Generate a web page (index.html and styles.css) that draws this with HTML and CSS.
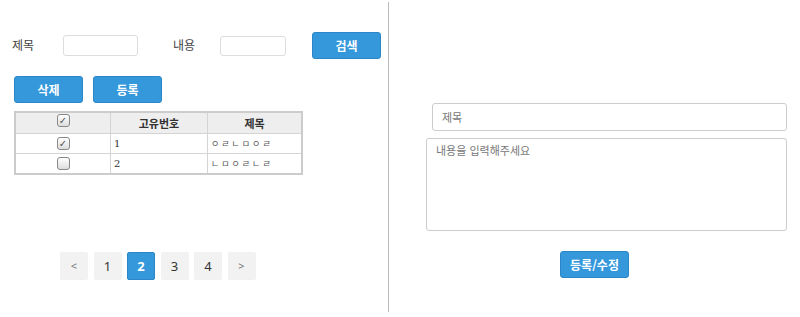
FILE: index.html
```html
<!DOCTYPE html>
<html lang="ko">
<head>
  <meta charset="UTF-8" />
  <title>게시판</title>
  <link rel="stylesheet" href="styles.css">
</head>
<body>
  <div class="wrap">
    <!-- 목록 -->
    <div class="list-panel">
      <div class="search-row">
        <span class="label label-title">제목</span>
        <input type="text" class="search-input input-title" />
        <span class="label label-content">내용</span>
        <input type="text" class="search-input input-content" />
        <button class="btn btn-search">검색</button>
      </div>
      <div class="action-row">
        <button class="btn">삭제</button>
        <button class="btn">등록</button>
      </div>
      <table class="list-table">
        <thead>
          <tr>
            <th class="col-check top"><span class="check checked">✓</span></th>
            <th class="col-no">고유번호</th>
            <th class="col-title">제목</th>
          </tr>
        </thead>
        <tbody>
          <tr>
            <td class="col-check"><span class="check checked">✓</span></td>
            <td>1</td>
            <td class="jamo">ㅇㄹㄴㅁㅇㄹ</td>
          </tr>
          <tr>
            <td class="col-check"><span class="check"></span></td>
            <td>2</td>
            <td class="jamo">ㄴㅁㅇㄹㄴㄹ</td>
          </tr>
        </tbody>
      </table>
      <div class="paging">
        <a class="page arrow">&lt;</a>
        <a class="page">1</a>
        <a class="page active">2</a>
        <a class="page">3</a>
        <a class="page">4</a>
        <a class="page arrow">&gt;</a>
      </div>
    </div>

    <!-- 작성 -->
    <div class="form-panel">
      <input type="text" class="form-title" placeholder="제목" />
      <textarea class="form-content" placeholder="내용을 입력해주세요"></textarea>
      <div class="form-actions">
        <button class="btn">등록/수정</button>
      </div>
    </div>
  </div>
</body>
</html>
```

FILE: styles.css
```css
body {
  margin: 0;
  font-family: 'Noto Sans CJK KR', 'Noto Sans', sans-serif;
  font-size: 12px;
  color: #333;
  background-color: #fff;
}

.wrap {
  display: flex;
  margin-top: 2px;
  height: 310px;
}

.list-panel {
  box-sizing: border-box;
  width: 389px;
  border-right: 1px solid #bbb;
}

.search-row {
  display: flex;
  align-items: center;
  padding: 30px 0 0 12px;
}

.label {
  font-size: 12px;
  color: #444;
  margin-top: -2px;
}

.label-title {
  width: 51px;
}

.label-content {
  width: 47px;
  margin-left: 35px;
}

.search-input {
  box-sizing: border-box;
  height: 21px;
  border: 1px solid #ddd;
  border-radius: 3px;
  padding: 0 4px;
  margin: 0;
}

.input-title {
  width: 75px;
}

.input-content {
  width: 66px;
  height: 20px;
}

.btn {
  box-sizing: border-box;
  width: 69px;
  height: 27px;
  padding: 0;
  background-color: #3498db;
  color: white;
  border: 1px solid #2a86c6;
  border-radius: 3px;
  font-family: 'Noto Sans CJK KR', sans-serif;
  font-size: 12px;
  font-weight: bold;
  cursor: pointer;
}

.btn-search {
  margin-left: 26px;
}

.action-row {
  display: flex;
  gap: 10px;
  padding: 17px 0 0 14px;
}

.list-table {
  margin: 8px 0 0 14px;
  width: 289px;
  table-layout: fixed;
  border-collapse: collapse;
  border: 2px solid #ccc;
  font-size: 11px;
}

.list-table th,
.list-table td {
  border: 1px solid #d4d4d4;
  padding: 0 3px;
  height: 19px;
  text-align: left;
  font-weight: normal;
  color: #333;
}

.list-table th {
  background-color: #eee;
  text-align: center;
  font-weight: bold;
  height: 20px;
}

.list-table td {
  font-family: 'DejaVu Serif', serif;
  font-size: 10px;
}

.list-table td.jamo {
  font-family: 'Noto Sans CJK KR', sans-serif;
  font-size: 9px;
  letter-spacing: 2px;
  color: #555;
}

.list-table .col-check {
  width: 94px;
  text-align: center;
  padding: 0;
}

.list-table .col-no {
  width: 90px;
}

.list-table .top {
  vertical-align: top;
}

.check {
  display: inline-block;
  box-sizing: border-box;
  width: 13px;
  height: 13px;
  border: 1px solid #888;
  border-radius: 3px;
  background: linear-gradient(#fff, #ddd);
  font-family: 'DejaVu Sans', sans-serif;
  font-size: 10px;
  line-height: 11px;
  color: #555;
  vertical-align: middle;
  text-align: center;
  font-weight: normal;
}

.top .check {
  margin-top: 1px;
  vertical-align: top;
}

.paging {
  display: flex;
  gap: 5.5px;
  padding: 77px 0 0 60px;
}

.page {
  width: 28px;
  height: 28px;
  line-height: 28px;
  text-align: center;
  background-color: #f2f2f2;
  border-radius: 2px;
  font-family: 'Noto Sans', sans-serif;
  font-size: 13px;
  color: #333;
  cursor: pointer;
}

.page.arrow {
  font-size: 11px;
  color: #777;
}

.page.active {
  background-color: #3498db;
  border: 1px solid #2a86c6;
  box-sizing: border-box;
  line-height: 26px;
  color: white;
  font-weight: bold;
}

.form-panel {
  flex: 1;
  display: flex;
  flex-direction: column;
  align-items: flex-end;
  padding: 101px 13px 0 0;
}

.form-title,
.form-content {
  box-sizing: border-box;
  border: 1px solid #ccc;
  border-radius: 3px;
  margin: 0;
  font-family: 'Noto Sans CJK KR', sans-serif;
  font-size: 11px;
  color: #333;
}

.form-title {
  width: 355px;
  height: 28px;
  padding: 0 9px;
}

.form-content {
  width: 361px;
  height: 93px;
  margin-top: 7px;
  padding: 3px 9px;
  resize: none;
}

::placeholder {
  color: #777;
}

.form-actions {
  align-self: stretch;
  display: flex;
  justify-content: center;
  padding: 20px 0 0 13px;
}
```
